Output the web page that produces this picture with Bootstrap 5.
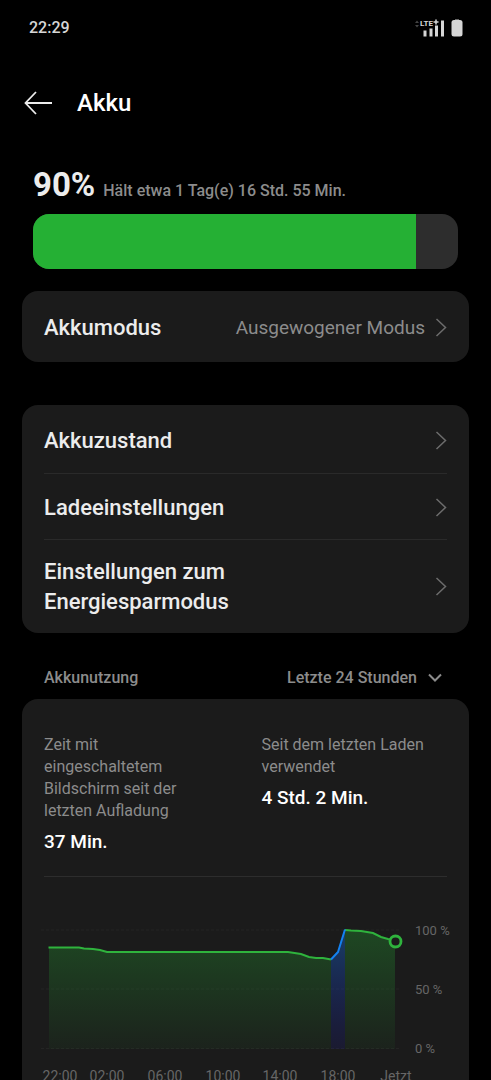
<!DOCTYPE html>
<html lang="de" data-bs-theme="dark">
<head>
<meta charset="utf-8">
<meta name="viewport" content="width=device-width, initial-scale=1">
<title>Akku</title>
<link href="https://cdn.jsdelivr.net/npm/bootstrap@5.3.0/dist/css/bootstrap.min.css" rel="stylesheet">
<style>
  body { background: #000; color: #ececec; font-family: Roboto, "Noto Sans", sans-serif; }
  .scroll-pane { scrollbar-width: none; }
  .page-body { --bs-gutter-x: 44px; }
  .status-bar { height: 55px; padding: 0 26px 0 29px; font-size: 16px; color: #d6d6d6; }
  .title-bar { height: 96px; padding: 0 24px; gap: 25px; }
  .title-bar h1 { font-size: 24px; line-height: 32px; font-weight: 500; }
  .charge { padding: 14px 11px 0; }
  .charge-value { font-size: 33px; line-height: 40px; font-weight: 700; }
  .charge-time { font-size: 16px; color: #8c8c8c; }
  .charge .progress { height: 55px; border-radius: 16px; background: #2d2d2d; margin-top: 9px; }
  .charge .progress-bar { background: #25b034; }
  .pane { background: #1b1b1b; border: 0; border-radius: 16px; padding: 0 22px; }
  .mode-card { margin-top: 22px; }
  .list-card { margin-top: 43px; padding-top: 2px; padding-bottom: 1px; }
  .setting { min-height: 66px; padding: 17px 0 15px; font-size: 22px; line-height: 30px; font-weight: 500; color: #ececec; }
  .setting + .setting { border-top: 1px solid #2a2a2a; }
  .mode-row { min-height: 71px; }
  .setting-value { font-size: 19px; font-weight: 400; color: #8c8c8c; }
  .setting-name { max-width: 240px; }
  .chev { margin-left: 10px; flex-shrink: 0; }
  .usage-head { height: 66px; padding: 24px 22px 0; font-size: 16px; line-height: 24px; font-weight: 500; color: #8c8c8c; }
  .usage-range { width: auto; border: 0; padding: 0 30px 0 0; font-size: 16px; line-height: 24px; font-weight: 500; color: #8c8c8c; background: transparent url("data:image/svg+xml,%3Csvg xmlns='http://www.w3.org/2000/svg' viewBox='0 0 16 10' fill='none' stroke='%238c8c8c' stroke-width='2'%3E%3Cpath d='M2 1.5l6 6 6-6'/%3E%3C/svg%3E") no-repeat right 4px center / 16px 10px; }
  .usage-pane { border-radius: 16px 16px 0 0; padding-top: 35px; padding-bottom: 32px; }
  .stat { font-size: 16px; line-height: 22px; color: #8c8c8c; font-weight: 400; }
  .stat-value { font-size: 19px; line-height: 28px; font-weight: 500; color: #fff; margin-top: 6px; }
  .stat-time { max-width: 150px; }
  .rule { border-top: 1px solid #2d2d2d; margin-top: 20px; }
  .chart { margin: 23px -3px 0; }
  .chart text { font-size: 14px; fill: #666; }
  .chart .levels text { font-size: 13px; }
  .net-label { font: 700 8px Roboto, sans-serif; }
</style>
</head>
<body class="vh-100 d-flex flex-column overflow-hidden">
<svg class="d-none" aria-hidden="true">
  <symbol id="chevron" viewBox="0 0 12 20"><path d="M1.500 1L10.500 9.500l-9 8.500" fill="none" stroke="#6c6c6c" stroke-width="1.500"/></symbol>
</svg>

<div class="status-bar d-flex align-items-center justify-content-between fw-medium flex-shrink-0">
  <span>22:29</span>
  <svg width="50" height="22" viewBox="0 0 50 22" fill="#d6d6d6" role="img" aria-label="LTE+, Akku">
    <path d="M0 6l2-2.500L4 6zM0 8h4l-2 2.500z" fill="#444"/>
    <path d="M8.500 13.500h3v6h-3zM14.500 11.500h3v8h-3zM20 8.500h3v11h-3zM26 3.500h3v16h-3z"/>
    <text class="net-label" x="5" y="9">LTE</text>
    <path d="M18.500 5h5M21 2.500v5" stroke="#d6d6d6" stroke-width="1.500"/>
    <path d="M40 2h4v2h-4z" fill="#666"/><rect x="36.500" y="3" width="11" height="16.500" rx="2.500"/>
  </svg>
</div>

<header class="title-bar d-flex align-items-center flex-shrink-0">
  <button type="button" class="btn p-0 border-0 lh-1" aria-label="Zurück">
    <svg width="28" height="24" viewBox="0 0 28 24" fill="none" stroke="#ececec" stroke-width="1.800"><path d="M28 12H1.500M12 1L1.500 12 12 23"/></svg>
  </button>
  <h1 class="m-0">Akku</h1>
</header>

<main class="scroll-pane flex-grow-1 overflow-auto">
  <div class="container-fluid page-body">
    <section class="charge">
      <div class="d-flex align-items-baseline gap-2">
        <span class="charge-value">90%</span>
        <span class="charge-time fw-medium">Hält etwa 1 Tag(e) 16 Std. 55 Min.</span>
      </div>
      <div class="progress" role="progressbar" aria-label="Akkustand" aria-valuenow="90" aria-valuemin="0" aria-valuemax="100">
        <div class="progress-bar" style="width:90%"></div>
      </div>
    </section>

    <nav class="pane card mode-card">
      <a href="#" class="setting mode-row d-flex align-items-center text-decoration-none">
        <span class="flex-grow-1">Akkumodus</span>
        <span class="setting-value">Ausgewogener Modus</span>
        <svg class="chev" width="12" height="20"><use href="#chevron"/></svg>
      </a>
    </nav>

    <nav class="pane card list-card">
      <a href="#" class="setting d-flex align-items-center justify-content-between text-decoration-none">
        <span>Akkuzustand</span><svg class="chev" width="12" height="20"><use href="#chevron"/></svg>
      </a>
      <a href="#" class="setting d-flex align-items-center justify-content-between text-decoration-none">
        <span>Ladeeinstellungen</span><svg class="chev" width="12" height="20"><use href="#chevron"/></svg>
      </a>
      <a href="#" class="setting d-flex align-items-center justify-content-between text-decoration-none">
        <span class="setting-name">Einstellungen zum Energiesparmodus</span><svg class="chev" width="12" height="20"><use href="#chevron"/></svg>
      </a>
    </nav>

    <div class="usage-head d-flex align-items-center justify-content-between">
      <label for="range">Akkunutzung</label>
      <select id="range" class="form-select usage-range"><option>Letzte 24 Stunden</option></select>
    </div>

    <section class="pane card usage-pane">
      <div class="row">
        <div class="col-6">
          <div class="stat stat-time">Zeit mit eingeschaltetem Bildschirm seit der letzten Aufladung</div>
          <div class="stat-value">37 Min.</div>
        </div>
        <div class="col-6 ps-3">
          <div class="stat">Seit dem letzten Laden verwendet</div>
          <div class="stat-value">4 Std. 2 Min.</div>
        </div>
      </div>
      <div class="rule"></div>
      <div class="chart">
        <svg class="d-block w-100 overflow-visible" viewBox="0 0 409 190" role="img" aria-label="Akkustand der letzten 24 Stunden">
          <defs>
            <linearGradient id="green" x1="0" y1="30" x2="0" y2="149" gradientUnits="userSpaceOnUse"><stop stop-color="#25b034" stop-opacity=".3"/><stop offset="1" stop-color="#25b034" stop-opacity=".05"/></linearGradient>
            <linearGradient id="blue" x1="0" y1="30" x2="0" y2="149" gradientUnits="userSpaceOnUse"><stop stop-color="#1482f0" stop-opacity=".36"/><stop offset="1" stop-color="#1414f0" stop-opacity=".1"/></linearGradient>
          </defs>
          <path d="M0 30H359M0 89H359M0 148.500H359" stroke="#242424" stroke-dasharray="3 2"/>
          <path d="M8 47.500H38L43 48.500 52 49 59 50 66 52H247L260 54 268 57 275 58 290 59V149H8zM304 30L320 31 332 33 340 37 354 41V149H304z" fill="url(#green)"/>
          <path d="M290 59L297 52 304 30V149H290z" fill="url(#blue)"/>
          <g fill="none" stroke-width="2">
            <path d="M7.500 47.500H38L43 48.500 52 49 59 50 66 52H247L260 54 268 57 275 58 282 58 290 59.500M304 30L310 30.500 320 31 332 33 340 37 347 39 349 39.500" stroke="#2fb33d"/>
            <path d="M290 59.500L297 52 304 29.500" stroke="#1482f0" stroke-linejoin="round"/>
            <circle cx="354.500" cy="41.500" r="5.500" fill="#1b1b1b" stroke="#2fb33d" stroke-width="2.800"/>
          </g>
          <g class="levels"><text x="374" y="35">100 %</text><text x="374" y="94">50 %</text><text x="374" y="153">0 %</text></g>
          <g text-anchor="middle"><text x="19" y="181">22:00</text><text x="66" y="181">02:00</text><text x="124" y="181">06:00</text><text x="182" y="181">10:00</text><text x="239" y="181">14:00</text><text x="297" y="181">18:00</text><text x="355" y="181">Jetzt</text></g>
        </svg>
      </div>
    </section>
  </div>
</main>
<script src="https://cdn.jsdelivr.net/npm/bootstrap@5.3.0/dist/js/bootstrap.bundle.min.js"></script>
</body>
</html>
